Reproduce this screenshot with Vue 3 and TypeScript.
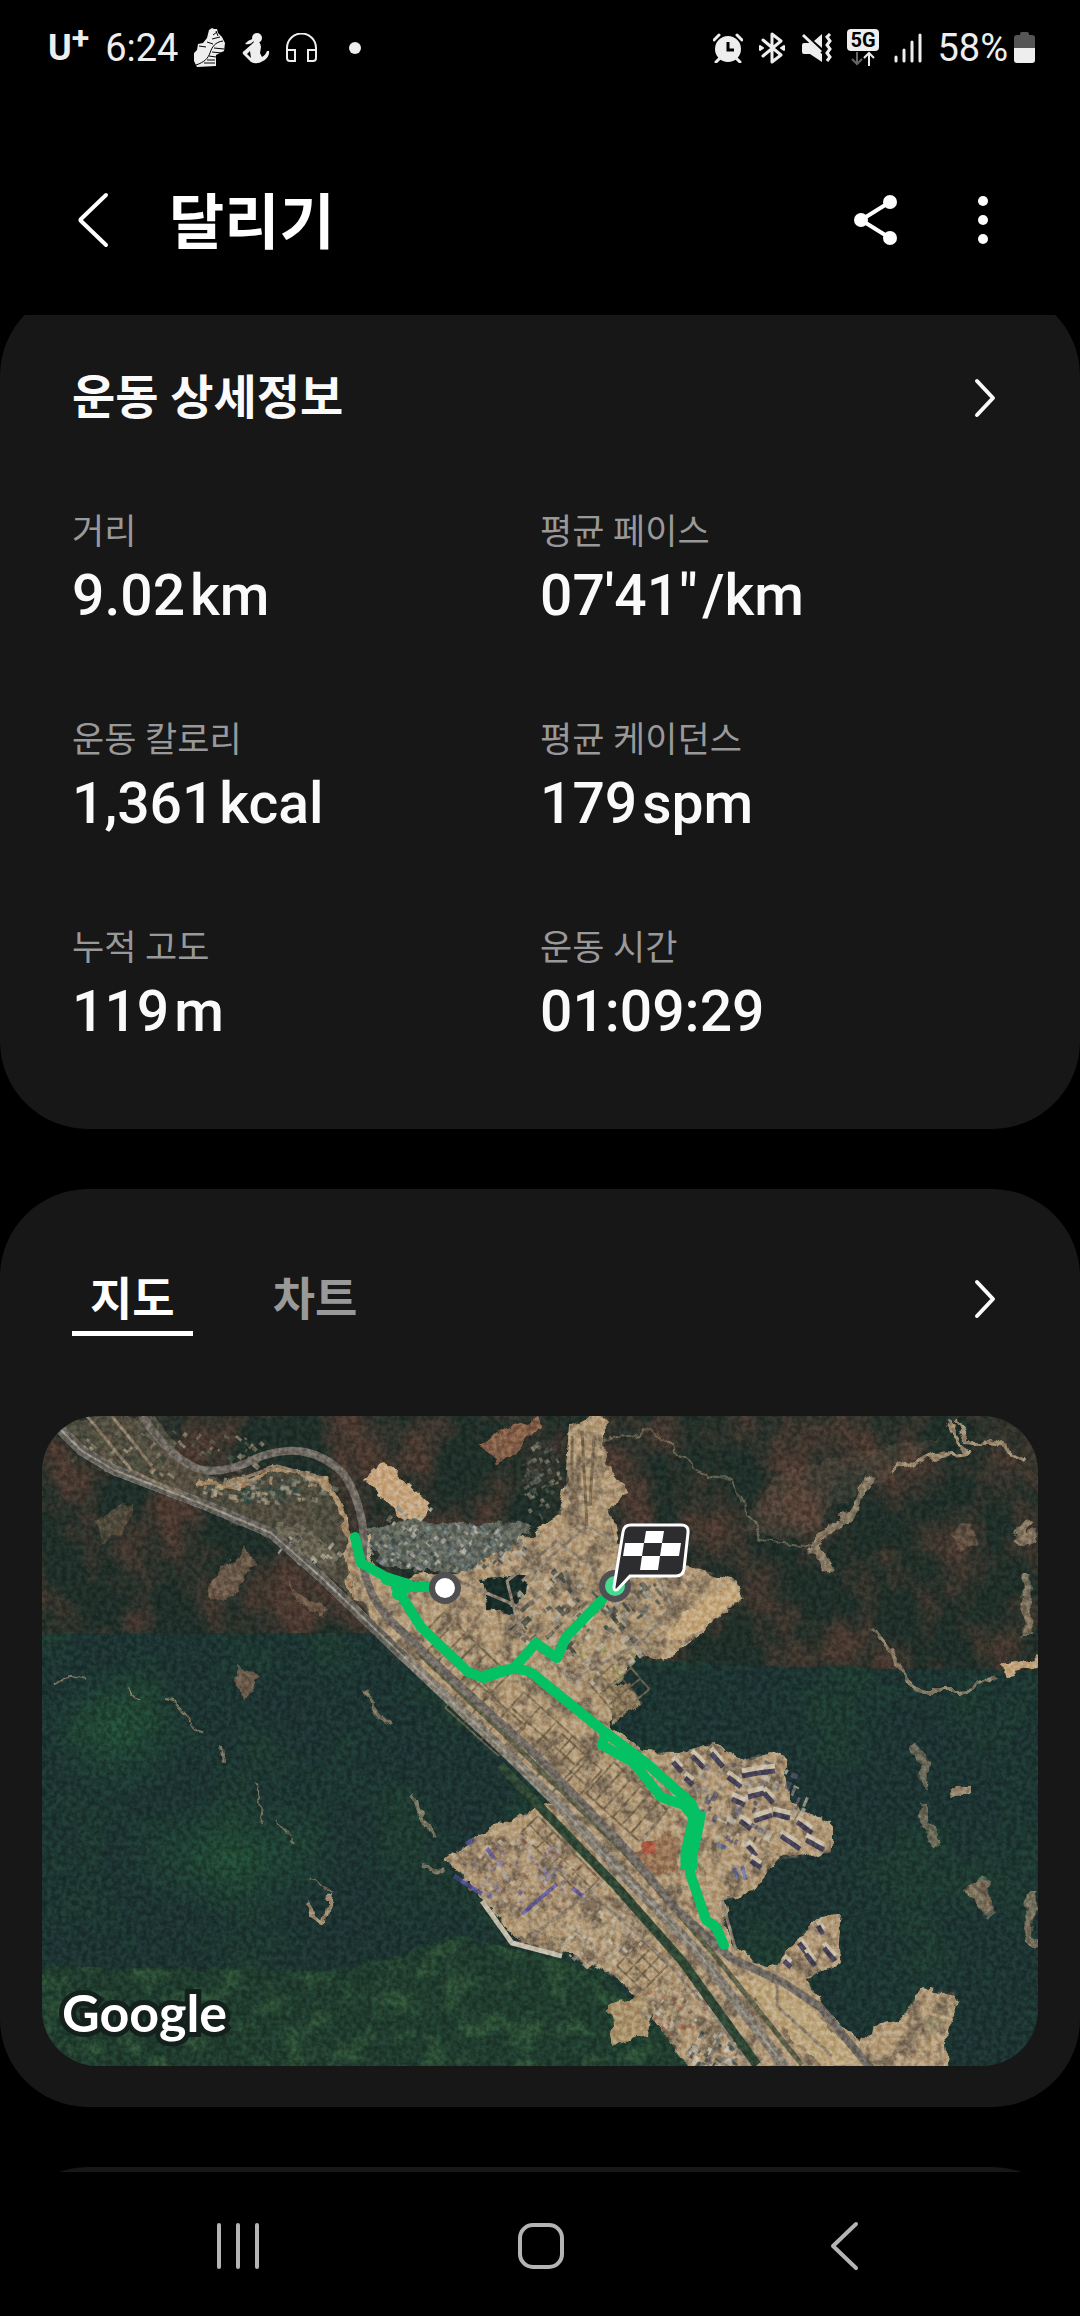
<script setup lang="ts">
import { ref } from 'vue'

interface Metric {
  label: string
  value: string
  unit: string
}

interface Mark {
  x: number
  y: number
  w: number
  h: number
  angle: number
  fill: string
}

interface Cluster {
  cx: number
  cy: number
  rx: number
  ry: number
  count: number
  size: number
  angle: number
  fills: string[]
}

interface Parcel {
  x: number
  y: number
  w: number
  h: number
  cols: number
  rows: number
  angle: number
}

const metrics: Metric[] = [
  { label: '거리', value: '9.02', unit: 'km' },
  { label: '평균 페이스', value: '07\'41"', unit: '/km' },
  { label: '운동 칼로리', value: '1,361', unit: 'kcal' },
  { label: '평균 케이던스', value: '179', unit: 'spm' },
  { label: '누적 고도', value: '119', unit: 'm' },
  { label: '운동 시간', value: '01:09:29', unit: '' },
]

const tabs = ['지도', '차트']
const activeTab = ref(0)

// Seeded generator, so the terrain is the same on every load
function createRandom(seed: number): () => number {
  let state = seed
  return () => {
    state = (state * 16807) % 2147483647
    return state / 2147483647
  }
}

const clusters: Cluster[] = [
  { cx: 405, cy: 130, rx: 82, ry: 24, count: 230, size: 5, angle: 40, fills: ['#8d8f88', '#5c655f', '#b3ada0', '#3d4a45', '#6f7f86'] },
  { cx: 515, cy: 195, rx: 44, ry: 42, count: 90, size: 9, angle: 48, fills: ['#55564e', '#77736a', '#a59c8a', '#3a4340', '#c6b89d'] },
  { cx: 590, cy: 190, rx: 32, ry: 40, count: 60, size: 9, angle: 50, fills: ['#4c5350', '#6c7068', '#9c9584', '#35403d'] },
  { cx: 560, cy: 240, rx: 40, ry: 30, count: 55, size: 8, angle: -38, fills: ['#a3927a', '#8e8270', '#b9b0a0', '#93935f'] },
  { cx: 705, cy: 385, rx: 62, ry: 46, count: 90, size: 9, angle: 24, fills: ['#8d8a86', '#6b6878', '#b1a793', '#58586c', '#c3b9a6'] },
  { cx: 478, cy: 455, rx: 54, ry: 38, count: 150, size: 6, angle: 42, fills: ['#a08a72', '#bfae93', '#8a6a55', '#9b9288', '#7d7690'] },
  { cx: 560, cy: 520, rx: 42, ry: 28, count: 80, size: 6, angle: 42, fills: ['#b3a78f', '#a39a8c', '#8e7f6c', '#c6bba6'] },
  { cx: 635, cy: 590, rx: 34, ry: 22, count: 70, size: 6, angle: 42, fills: ['#9c8f7c', '#c3b8a2', '#7f7363', '#a4674e'] },
  { cx: 672, cy: 635, rx: 26, ry: 20, count: 80, size: 6, angle: 30, fills: ['#6c6f69', '#b0aba0', '#3f4a45', '#d0c9ba'] },
  { cx: 130, cy: 35, rx: 100, ry: 24, count: 90, size: 6, angle: 40, fills: ['#8a7b66', '#41503f', '#9b8c74', '#5a5e4c'] },
  { cx: 225, cy: 72, rx: 70, ry: 14, count: 80, size: 7, angle: 8, fills: ['#6d746a', '#2f4a40', '#a89274', '#8c8b7c'] },
  { cx: 500, cy: 60, rx: 18, ry: 40, count: 60, size: 5, angle: 60, fills: ['#5e6558', '#7f7a68', '#46524a'] },
  { cx: 270, cy: 130, rx: 30, ry: 18, count: 26, size: 6, angle: 40, fills: ['#9c9888', '#3c4640', '#b5ae9c'] },
  { cx: 370, cy: 100, rx: 26, ry: 14, count: 20, size: 5, angle: 40, fills: ['#c7b9a0', '#8e8a7c'] },
]

function buildMarks(): Mark[] {
  const random = createRandom(4217)
  const marks: Mark[] = []
  for (const c of clusters) {
    for (let i = 0; i < c.count; i++) {
      const turn = random() * Math.PI * 2
      const reach = Math.sqrt(random())
      marks.push({
        x: Math.round(c.cx + Math.cos(turn) * reach * c.rx),
        y: Math.round(c.cy + Math.sin(turn) * reach * c.ry),
        w: Math.round(2 + random() * c.size),
        h: Math.round(2 + random() * c.size * 0.5),
        angle: c.angle + (random() > 0.5 ? 90 : 0),
        fill: c.fills[Math.floor(random() * c.fills.length)],
      })
    }
  }
  return marks
}

const marks = buildMarks()

// Plots of the new town, laid out along the highway
const parcels: Parcel[] = [
  { x: 402, y: 196, w: 15, h: 24, cols: 6, rows: 2, angle: 44 },
  { x: 482, y: 276, w: 22, h: 20, cols: 4, rows: 3, angle: 42 },
  { x: 430, y: 262, w: 24, h: 20, cols: 3, rows: 2, angle: 42 },
  { x: 520, y: 318, w: 18, h: 22, cols: 3, rows: 2, angle: 42 },
  { x: 572, y: 346, w: 12, h: 42, cols: 6, rows: 1, angle: 42 },
  { x: 496, y: 400, w: 22, h: 12, cols: 4, rows: 2, angle: 46 },
  { x: 548, y: 268, w: 14, h: 14, cols: 3, rows: 3, angle: -40 },
  { x: 600, y: 524, w: 12, h: 12, cols: 3, rows: 3, angle: 44 },
]

function parcelPath(p: Parcel): string {
  let d = ''
  for (let c = 0; c <= p.cols; c++) d += `M${c * p.w} 0V${p.rows * p.h}`
  for (let r = 0; r <= p.rows; r++) d += `M0 ${r * p.h}H${p.cols * p.w}`
  return d
}

// Long shadows of the apartment blocks: start point and end point
const blocks: number[][] = [
  [631, 346, 640, 356], [650, 340, 662, 352], [669, 337, 681, 351], [643, 362, 651, 369],
  [686, 361, 699, 371], [700, 360, 716, 357], [716, 357, 733, 355],
  [690, 383, 703, 389], [706, 381, 722, 377], [722, 377, 731, 387],
  [698, 405, 709, 413], [712, 405, 730, 399], [731, 398, 748, 402],
  [755, 406, 770, 417], [739, 420, 758, 433], [764, 424, 782, 434],
  [706, 430, 714, 440], [709, 445, 719, 452],
  [776, 510, 781, 518], [757, 527, 766, 539], [764, 538, 773, 550], [782, 532, 793, 545], [742, 545, 749, 551],
]
</script>

<template>
  <div class="screen">
    <div class="status">
      <div class="status-side status-left">
        <span class="carrier">U<sup>+</sup></span>
        <span class="status-text">6:24</span>
        <svg class="shoe" width="32" height="40" viewBox="0 0 32 40" aria-hidden="true">
          <path d="M15 2l3-2 2 1 3 0 1 4 4 4 3 6-1 8-8 4v11L3 39 0 33V25l3-3 1-6 5-1 4-5z" fill="#eee" />
          <path d="M29 13c-8 1-11 6-13 12-2 5-5 9-14 12M19 7l4-3M18 11l8-2M13 14l6 2M5 18l7 1M22 3l2 5" fill="none" stroke="#000" stroke-width="1" />
          <path d="M20 20l10 1M18 24l10 1M15 28l7 1M13 32l8 0M10 35l11 0" stroke="#000" stroke-width="1" />
        </svg>
        <svg width="28" height="32" viewBox="0 0 28 32" aria-hidden="true">
          <circle cx="15" cy="6" r="5" fill="#eee" />
          <path d="M12 6C9 8 6 8 3 12c4 1 7 0 9-4z" fill="#eee" />
          <path d="M12 10h5q2 2 2 5l-1 6 2 4c2-1 4-3 5-6h2c1 4-3 9-6 10q-6 4-12 1L1 22q-1-2 1-3l8-7z" fill="#eee" />
          <path d="M8 19l-3 3 4 4z" fill="#000" />
        </svg>
        <svg width="31" height="30" viewBox="0 0 31 30" fill="none" stroke="#eee" stroke-width="2" aria-hidden="true">
          <path d="M1 25V15a14 14 0 0 1 29 0v10M1 17h8v11H4q-3 0-3-3M30 17h-8v11h5q3 0 3-3" />
        </svg>
        <span class="dot" />
      </div>
      <div class="status-side status-right">
        <svg width="30" height="30" viewBox="0 0 30 30" aria-hidden="true">
          <circle cx="15" cy="16" r="13" fill="#eee" />
          <path d="M1 7l5-5M29 7l-5-5M3 29l4-4M27 29l-4-4" stroke="#eee" stroke-width="3" stroke-linecap="round" />
          <path d="M15 9v8h6" fill="none" stroke="#000" stroke-width="3" />
        </svg>
        <svg width="28" height="32" viewBox="0 0 28 32" fill="none" stroke="#eee" stroke-width="3" stroke-linecap="round" stroke-linejoin="round" aria-hidden="true">
          <path d="M5 8l18 15-9 7V2l9 7L5 24" />
          <path d="M2 14l3 2-3 2zM26 14l-3 2 3 2z" stroke-width="2" fill="#eee" />
        </svg>
        <svg width="31" height="30" viewBox="0 0 31 30" aria-hidden="true">
          <path d="M1 12q0-2 2-2h6L21 21v8L9 21H3q-2 0-2-2zM13 8l8-7v14z" fill="#eee" />
          <path d="M2 2l18 17" stroke="#eee" stroke-width="3" />
          <path d="M29 1l-3 3 3 4-3 4 3 4-3 4 3 4-3 4" fill="none" stroke="#eee" stroke-width="3" />
        </svg>
        <svg class="network" width="32" height="38" viewBox="0 0 32 38" aria-hidden="true">
          <rect width="32" height="22" rx="4" fill="#eee" />
          <text x="16" y="18" text-anchor="middle" class="network-text">5G</text>
          <path d="M10 23v12M5 30l5 5 5-5" fill="none" stroke="#666" stroke-width="2" />
          <path d="M22 37V24M17 29l5-5 5 5" fill="none" stroke="#eee" stroke-width="2" />
        </svg>
        <svg width="28" height="30" viewBox="0 0 28 30" stroke="#eee" stroke-width="3" stroke-linecap="round" aria-hidden="true">
          <path d="M2 24v4M10 17v11M18 9v19M26 2v26" />
        </svg>
        <span class="battery-group">
          <span class="status-text">58%</span>
          <svg width="21" height="32" viewBox="0 0 21 32" aria-hidden="true">
            <path d="M6 2q0-2 2-2h5q2 0 2 2v1h3q3 0 3 3v11H0V6q0-3 3-3h3z" fill="#555" />
            <path d="M0 16h21v12q0 3-3 3H3q-3 0-3-3z" fill="#eee" />
          </svg>
        </span>
      </div>
    </div>

    <header class="header">
      <button class="icon-button" type="button" aria-label="뒤로">
        <svg width="32" height="56" viewBox="0 0 32 56" fill="none" stroke="#fff" stroke-width="4" stroke-linecap="round" stroke-linejoin="round">
          <path d="M29 3L4 27q-1 1 0 2l25 24" />
        </svg>
      </button>
      <h1 class="title">달리기</h1>
      <button class="icon-button share" type="button" aria-label="공유">
        <svg width="44" height="50" viewBox="0 0 44 50" fill="#fff">
          <path d="M36 7L7 25l29 18" fill="none" stroke="#fff" stroke-width="4" />
          <circle cx="36" cy="7" r="7" /><circle cx="7" cy="25" r="7" /><circle cx="36" cy="43" r="7" />
        </svg>
      </button>
      <button class="icon-button" type="button" aria-label="더보기">
        <svg width="10" height="48" viewBox="0 0 10 48" fill="#fff">
          <circle cx="5" cy="5" r="5" /><circle cx="5" cy="24" r="5" /><circle cx="5" cy="43" r="5" />
        </svg>
      </button>
    </header>

    <main class="content">
      <section class="card details">
        <div class="card-head">
          <h2 class="section-title">운동 상세정보</h2>
          <button class="icon-button chevron" type="button" aria-label="운동 상세정보 보기">
            <svg width="22" height="40" viewBox="0 0 22 40" fill="none" stroke="#fafafa" stroke-width="4" stroke-linecap="round" stroke-linejoin="round">
              <path d="M3 3l16 17L3 37" />
            </svg>
          </button>
        </div>
        <dl class="metrics">
          <div v-for="m in metrics" :key="m.label" class="metric">
            <dt class="metric-label">{{ m.label }}</dt>
            <dd class="metric-value">
              <span>{{ m.value }}</span><span v-if="m.unit">{{ m.unit }}</span>
            </dd>
          </div>
        </dl>
      </section>

      <section class="card route-card">
        <div class="card-head">
          <div class="tabs" role="tablist">
            <button
              v-for="(tab, i) in tabs"
              :key="tab"
              class="tab"
              :class="{ active: activeTab === i }"
              type="button"
              role="tab"
              :aria-selected="activeTab === i"
              @click="activeTab = i"
            >{{ tab }}</button>
          </div>
          <button class="icon-button chevron" type="button" aria-label="지도 보기">
            <svg width="22" height="40" viewBox="0 0 22 40" fill="none" stroke="#fafafa" stroke-width="4" stroke-linecap="round" stroke-linejoin="round">
              <path d="M3 3l16 17L3 37" />
            </svg>
          </button>
        </div>

        <div class="map">
          <svg class="map-art" viewBox="0 0 996 650" role="img" aria-label="달리기 경로 지도">
            <defs>
              <filter id="ragged" x="-5%" y="-5%" width="110%" height="110%" color-interpolation-filters="sRGB">
                <feTurbulence type="fractalNoise" baseFrequency="0.06" numOctaves="3" seed="5" />
                <feDisplacementMap in="SourceGraphic" scale="14" xChannelSelector="R" yChannelSelector="G" />
              </filter>
              <filter id="brown" x="0" y="0" width="100%" height="100%" color-interpolation-filters="sRGB">
                <feTurbulence type="fractalNoise" baseFrequency="0.018 0.014" numOctaves="6" seed="12" />
                <feColorMatrix values="0 0 0 0 0.29  0 0 0 0 0.225  0 0 0 0 0.19  3 0 0 0 -1.2" result="n" />
                <feComposite in="n" in2="SourceGraphic" operator="in" />
              </filter>
              <filter id="green" x="0" y="0" width="100%" height="100%" color-interpolation-filters="sRGB">
                <feTurbulence type="fractalNoise" baseFrequency="0.012" numOctaves="5" seed="31" />
                <feColorMatrix values="0 0 0 0 0.13  0 0 0 0 0.26  0 0 0 0 0.19  4 0 0 0 -1.9" result="n" />
                <feComposite in="n" in2="SourceGraphic" operator="in" />
              </filter>
              <filter id="leafy" x="0" y="0" width="100%" height="100%" color-interpolation-filters="sRGB">
                <feTurbulence type="fractalNoise" baseFrequency="0.03 0.04" numOctaves="5" seed="8" />
                <feColorMatrix values="0 0 0 0 0.19  0 0 0 0 0.33  0 0 0 0 0.22  4 0 0 0 -1.9" result="n" />
                <feComposite in="n" in2="SourceGraphic" operator="in" />
              </filter>
              <filter id="earth" x="0" y="0" width="100%" height="100%" color-interpolation-filters="sRGB">
                <feTurbulence type="fractalNoise" baseFrequency="0.05" numOctaves="5" seed="19" />
                <feColorMatrix values="0 0 0 0 0.42  0 0 0 0 0.37  0 0 0 0 0.31  5 0 0 0 -2.3" result="n" />
                <feComposite in="n" in2="SourceGraphic" operator="in" />
              </filter>
              <filter id="grain" x="0" y="0" width="100%" height="100%" color-interpolation-filters="sRGB">
                <feTurbulence type="fractalNoise" baseFrequency="0.2" numOctaves="4" seed="3" />
                <feColorMatrix values="2.4 0 0 0 -0.7  2.4 0 0 0 -0.7  2.4 0 0 0 -0.7  0 0 0 0 1" />
              </filter>
              <radialGradient id="glade">
                <stop offset="0" stop-color="#245c38" stop-opacity="0.5" />
                <stop offset="1" stop-color="#245c38" stop-opacity="0" />
              </radialGradient>
              <path id="land" d="M528 10L562 -10L564 47L585 71L567 97L574 127L610 140L646 151L692 162L702 181L671 207L621 246L596 237L574 264L567 307L601 336L635 337L671 327L703 344L728 334L742 342L748 387L789 407L789 437L735 444L710 477L680 484L689 524L710 546L735 549L749 527L778 501L799 499L796 524L799 547L764 562L782 591L817 626L839 609L857 607L878 572L912 576L917 587L903 617L907 660L653 660L610 601L578 564L532 541L476 527L440 481L404 444L451 409L476 404L494 391L515 388L362 241L315 184L301 117L320 122L340 164L422 157L515 101L524 67Z" />
            </defs>

            <rect width="996" height="650" fill="#1c3331" />
            <path d="M0 0H996V256L700 250L596 244H350V217H0Z" fill="#1f2e28" />
            <path d="M0 0H996V256L700 250L596 244H350V217H0Z" filter="url(#brown)" />
            <path d="M0 217H350L596 244L996 256V650H0Z" filter="url(#green)" opacity="0.5" />
            <ellipse cx="75" cy="315" rx="75" ry="70" fill="url(#glade)" />
            <ellipse cx="190" cy="440" rx="120" ry="60" fill="url(#glade)" />
            <path d="M0 550L300 556L420 520L560 555L660 650H0Z" fill="#1f3b2e" filter="url(#ragged)" />
            <path d="M0 550L300 556L420 520L560 555L660 650H0Z" filter="url(#leafy)" opacity="0.8" />

            <g filter="url(#ragged)">
              <g fill="#76604e" opacity="0.85">
                <path d="M170 160L205 130L215 150L185 185L165 180Z" />
                <path d="M50 105L90 85L80 120L60 125Z" opacity="0.6" />
                <path d="M245 165L262 182L290 195L280 200L255 185Z" />
                <path d="M195 250L218 260L205 285L196 275Z" />
                <path d="M440 25L495 0L500 10L455 48Z" fill="#95684f" />
                <path d="M735 55L900 20L850 60L790 90L770 115L740 125L700 115Z" opacity="0.3" />
                <path d="M905 115L930 108L935 128L915 135Z" opacity="0.7" />
                <path d="M925 470L945 465L950 490L940 498Z" />
              </g>
              <g fill="none" stroke="#9c8a70" stroke-width="4" stroke-linejoin="round">
                <path d="M830 60L810 95L780 120L770 130L788 155" stroke-width="9" opacity="0.8" />
                <path d="M912 5L925 25L955 28L985 45" />
                <path d="M904 5L920 30L928 36L890 40L850 55" />
                <path d="M565 22L610 15L640 40L665 60L690 62L705 95L720 125L770 130" stroke-width="2" opacity="0.5" />
                <path d="M830 210L845 228L865 265L880 275L920 275L955 260" opacity="0.8" />
                <path d="M960 255L996 245" stroke="#c1a37b" stroke-width="10" />
                <path d="M10 268L35 260L45 262M85 270L97 284M120 282L135 285L150 308L160 316M180 330L182 346" stroke-width="2" opacity="0.7" />
                <path d="M213 365L222 405M236 405L253 428M268 462L290 480" stroke-width="2" opacity="0.6" />
                <path d="M266 485L270 500L282 508L286 480" />
                <path d="M870 330L884 345L882 370M880 390L885 410L898 430" stroke-width="8" opacity="0.6" />
                <path d="M985 105L975 125L996 120M985 160V220M988 475V520L996 530" stroke-width="9" opacity="0.7" />
                <path d="M325 275L335 300L350 308M370 380L390 420M380 450L402 455" opacity="0.7" />
              </g>
              <path d="M908 369H928V379H905Z" fill="#8e7d66" />
              <path d="M930 470L950 500M935 466L948 470" stroke="#8e8a70" stroke-width="10" opacity="0.5" />
              <path d="M342 44L390 91L376 112L350 92L319 64Z" fill="#c5a47d" />
              <path d="M233 107L254 107L280 122L301 144L290 154L262 140L240 120Z" fill="#8c8878" />
              <path d="M322 112L345 105L487 108L470 150L422 158L340 150Z" fill="#62675d" />
              <path d="M0 5L60 0H110L148 48L185 66L235 50L285 62L303 100L304 160L345 215L330 205L270 145L155 84L60 48Z" fill="#5c5747" opacity="0.75" />
              <path d="M155 65L190 70L230 53L280 62L303 100L308 170L350 225" fill="none" stroke="#a88c69" stroke-width="6" />
              <path d="M320 120V165L352 205L440 290" fill="none" stroke="#bda17a" stroke-width="18" />
              <use href="#land" fill="#b39b79" />
              <path d="M568 590L610 575L605 620L570 630Z" fill="#a9916c" />
            </g>
            <use href="#land" filter="url(#earth)" opacity="0.7" />

            <g filter="url(#ragged)">
              <path d="M437 164L487 159L480 180L472 201L447 191Z" fill="#172b27" />
              <path d="M566 265L590 270L600 290L570 305Z" fill="#8d7a5c" />
              <path d="M590 440L625 415L637 432L635 460L610 455Z" fill="#987657" />
              <path d="M600 428L612 424L614 438L602 442Z" fill="#ac5a43" />
              <path d="M650 190L690 165L700 182L668 205L640 225L625 222Z" fill="#c3a67c" />
              <path d="M690 560L780 649H820L770 590L730 566Z" fill="#bba47c" />
              <path d="M883 600L905 602L895 620L882 614Z" fill="#97896c" />
            </g>

            <g v-for="(p, i) in parcels" :key="i" :transform="`translate(${p.x} ${p.y}) rotate(${p.angle})`">
              <path :d="parcelPath(p)" fill="none" stroke="#74664f" stroke-width="2" opacity="0.8" />
            </g>
            <rect
              v-for="(m, i) in marks"
              :key="i"
              :x="m.x"
              :y="m.y"
              :width="m.w"
              :height="m.h"
              :fill="m.fill"
              :transform="`rotate(${m.angle} ${m.x} ${m.y})`"
              opacity="0.75"
            />
            <g stroke-width="5">
              <g v-for="(b, i) in blocks" :key="i">
                <path :d="`M${b[0]} ${b[1] - 5}L${b[2]} ${b[3] - 5}`" stroke="#c9bda6" />
                <path :d="`M${b[0]} ${b[1]}L${b[2]} ${b[3]}`" stroke="#464256" />
              </g>
            </g>
            <g fill="none" stroke="#54509a" stroke-width="4" opacity="0.8">
              <path d="M412 460L440 478M480 498L515 468M424 428L432 423M445 432L452 442M530 472L544 482" />
              <path d="M692 452L696 462M700 450L704 464M675 428L684 432" stroke="#5668a3" />
            </g>
            <g fill="none" stroke="#8e8171" stroke-width="3">
              <path d="M555 155L515 125L465 165L478 215L530 265L600 225L630 190L615 160M480 165L545 110L572 125" />
              <path d="M530 20V110M540 15L545 110M552 20L548 90" stroke="#7d6b54" />
              <path d="M475 190L400 158L340 200" />
              <path d="M575 452L548 476L620 540L680 610L705 649M548 476L500 440M548 476L490 520" />
              <path d="M680 484L694 535M735 567V590L790 640M600 425L620 400" />
            </g>
            <path d="M440 485L470 527L520 540" fill="none" stroke="#c4bba9" stroke-width="5" />

            <!-- highway and the parallel road -->
            <g fill="none" stroke-linejoin="round">
              <path d="M375 235L458 314L585 439L670 536L760 649" stroke="#5d6049" stroke-width="5" />
              <path d="M458 349L574 470L640 545L715 649" stroke="#2f4634" stroke-width="9" />
              <path d="M15 10L40 35L72 54L158 87L229 117L279 161L362 241L458 331L515 387L574 451L657 537L750 660" stroke="#827c72" stroke-width="10" />
              <path d="M15 10L40 35L72 54L158 87L229 117L279 161L362 241" stroke="#62605c" stroke-width="9" />
              <path d="M15 10L40 35L72 54L158 87L229 117L279 161L362 241L458 331L515 387L574 451L657 537L750 660" stroke="#96907f" stroke-width="2" />
              <path d="M100 0Q130 45 160 54Q185 58 215 42Q265 22 301 57Q320 85 322 124Q315 170 351 207L419 271L492 337L585 434L635 494L689 542L742 567L778 591L835 660" stroke="#706a63" stroke-width="8" />
              <path d="M45 0L90 55L140 78M70 0L110 50M185 68L235 50L280 62" stroke="#8a7b67" stroke-width="3" />
            </g>

            <rect class="grain" width="996" height="650" filter="url(#grain)" />

            <!-- recorded route -->
            <g fill="none" stroke="#04c164" stroke-width="10" stroke-linecap="round" stroke-linejoin="round">
              <path d="M313 121L319 147L344 161L365 168M387 171H354L379 211L426 256L442 262L472 252L494 227L515 242L524 221L560 184" />
              <path d="M442 260Q480 245 496 262L564 317L603 346L649 387L657 404L649 437L648 457L664 504L674 511L682 529" />
              <path d="M564 317L560 329L592 347L619 381L642 389L652 402" />
              <path d="M655 395L654 406L647 438V454" stroke-width="17" stroke-linecap="butt" />
              <path d="M345 163L366 169L356 178" stroke-width="12" />
            </g>
            <circle cx="403" cy="172" r="13" fill="#fff" stroke="#505052" stroke-width="6" />
            <circle cx="573" cy="170" r="13" fill="#45db8e" stroke="#505052" stroke-width="6" />
            <path d="M589 109H639Q647 109 646 117L642 153Q641 160 634 160H588L576 173Q572 176 572 171L581 116Q582 109 589 109Z" fill="#2d2d30" stroke="#fff" stroke-width="3" />
            <path d="M604 115H622L620 127H639L637 140H618L616 154H598L600 140H581L583 127H602ZM602 127L600 140H618L620 127Z" fill="#fff" fill-rule="evenodd" />
          </svg>
          <span class="attribution">Google</span>
        </div>
      </section>

      <section class="card next-card" />
    </main>

    <nav class="nav">
      <button class="icon-button" type="button" aria-label="최근 앱">
        <svg width="42" height="48" viewBox="0 0 42 48" stroke="#b4b4b4" stroke-width="4" stroke-linecap="round">
          <path d="M2 3v42M21 3v42M40 3v42" />
        </svg>
      </button>
      <button class="icon-button" type="button" aria-label="홈">
        <svg width="48" height="48" viewBox="0 0 48 48" fill="none" stroke="#b4b4b4" stroke-width="4">
          <rect x="3" y="3" width="42" height="42" rx="13" />
        </svg>
      </button>
      <button class="icon-button" type="button" aria-label="뒤로 가기">
        <svg width="30" height="50" viewBox="0 0 30 50" fill="none" stroke="#b4b4b4" stroke-width="4" stroke-linecap="round" stroke-linejoin="round">
          <path d="M27 3L4 25l23 22" />
        </svg>
      </button>
    </nav>
  </div>
</template>

<style>
body {
  background: #000;
}
</style>

<style scoped>
.screen {
  display: flex;
  flex-direction: column;
  height: 100vh;
  background: #000;
  color: #fafafa;
  font-family: Roboto, "Noto Sans CJK KR", sans-serif;
}

svg {
  display: block;
  flex: none;
}

.status {
  display: flex;
  flex: none;
  align-items: center;
  justify-content: space-between;
  height: 96px;
  padding: 0 45px 0 48px;
  color: #eee;
}

.status-side,
.battery-group {
  display: flex;
  align-items: center;
}

.status-left {
  gap: 16px;
}

.status-right {
  gap: 15px;
}

.battery-group {
  gap: 6px;
}

.carrier {
  display: flex;
  font-size: 36px;
  font-weight: 700;
  line-height: 40px;
}

.carrier sup {
  font-size: 32px;
  line-height: 20px;
}

.status-text {
  font-size: 38px;
  line-height: 48px;
}

.network-text {
  font-size: 20px;
  font-weight: 700;
}

.dot {
  width: 12px;
  height: 12px;
  margin-left: 16px;
  border-radius: 50%;
  background: #eee;
}

.header {
  display: flex;
  flex: none;
  align-items: center;
  height: 191px;
  margin-top: 28px;
  padding: 0 92px 0 77px;
}

.icon-button {
  display: flex;
  align-items: center;
  justify-content: center;
  padding: 0;
  border: 0;
  background: none;
}

.title {
  flex: 1;
  margin: 0 0 0 60px;
  padding-top: 8px;
  font-size: 60px;
  font-weight: 700;
  line-height: 80px;
  color: #fff;
}

.share {
  margin-right: 80px;
}

.content {
  display: flex;
  flex: 1;
  flex-direction: column;
  gap: 60px;
  min-height: 0;
  overflow-y: auto;
  scrollbar-width: none;
}

.card {
  flex: none;
  box-sizing: border-box;
  border-radius: 88px;
  background: #171717;
}

.details {
  margin-top: -27px;
  padding: 78px 72px 83px;
}

.card-head {
  display: flex;
  align-items: flex-start;
  justify-content: space-between;
}

.section-title {
  margin: 0;
  font-size: 47px;
  font-weight: 700;
  line-height: 64px;
}

.chevron {
  height: 64px;
  margin-right: 12px;
}

.metrics {
  display: grid;
  grid-template-columns: 1fr 1fr;
  row-gap: 87px;
  margin: 79px 0 0;
}

.metric {
  display: flex;
  flex-direction: column;
  gap: 5px;
}

.metric-label {
  font-size: 35px;
  line-height: 48px;
  color: #999;
}

.metric-value {
  display: flex;
  gap: 5px;
  margin: 0;
  font-size: 57px;
  font-weight: 500;
  line-height: 68px;
}

.route-card {
  padding: 78px 42px 41px;
}

.route-card .card-head {
  padding: 0 30px;
}

.tabs {
  display: flex;
  gap: 62px;
}

.tab {
  padding: 0 18px;
  border: 0;
  border-bottom: 5px solid transparent;
  background: none;
  color: #999;
  font-family: inherit;
  font-size: 46px;
  font-weight: 700;
  line-height: 64px;
}

.tab.active {
  border-bottom-color: #fff;
  color: #fff;
}

.map {
  position: relative;
  margin-top: 80px;
  border-radius: 56px;
  overflow: hidden;
}

.map-art {
  width: 100%;
  height: auto;
}

.grain {
  mix-blend-mode: overlay;
  opacity: 0.2;
}

.attribution {
  position: absolute;
  left: 20px;
  bottom: 22px;
  color: #fff;
  font-family: Lato, sans-serif;
  font-size: 52px;
  font-weight: 700;
  line-height: 64px;
  -webkit-text-stroke: 10px #14201c;
  paint-order: stroke fill;
}

.next-card {
  height: 400px;
}

.nav {
  display: flex;
  flex: none;
  align-items: center;
  box-sizing: border-box;
  height: 144px;
  padding: 4px 85px 0 87px;
}

.nav .icon-button {
  flex: 1;
}
</style>
